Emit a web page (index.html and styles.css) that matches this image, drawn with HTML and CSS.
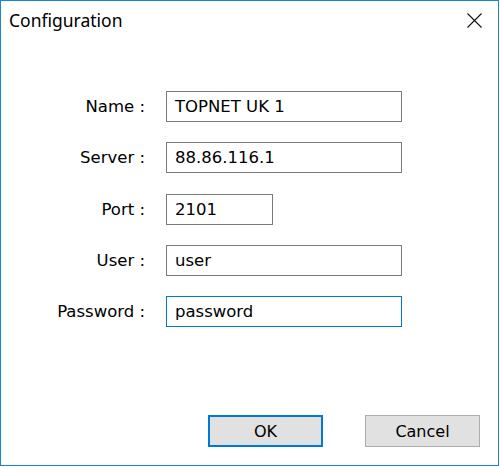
FILE: index.html
```html
<!DOCTYPE html>
<html>
<head>
<meta charset="utf-8">
<link rel="stylesheet" href="styles.css">
</head>
<body>
<div class="window">
  <div class="titlebar">
    <span class="title">Configuration</span>
    <svg class="close" width="15" height="15" viewBox="0 0 15 15"><path d="M0.5 0.5 L14.5 14.5 M14.5 0.5 L0.5 14.5" stroke="#111" stroke-width="1.1" fill="none"/></svg>
  </div>
  <div class="form">
    <label class="lbl">Name :</label>
    <div class="field wide">TOPNET UK 1</div>
    <label class="lbl">Server :</label>
    <div class="field wide">88.86.116.1</div>
    <label class="lbl">Port :</label>
    <div class="field short">2101</div>
    <label class="lbl">User :</label>
    <div class="field wide">user</div>
    <label class="lbl">Password :</label>
    <div class="field wide focused">password</div>
  </div>
  <div class="buttons">
    <div class="btn default">OK</div>
    <div class="btn">Cancel</div>
  </div>
</div>
</body>
</html>
```
FILE: styles.css
```css
html, body {
  margin: 0;
  padding: 0;
  background: #fff;
}
.window {
  box-sizing: border-box;
  width: 499px;
  height: 466px;
  border: 1px solid #1883d7;
  display: flex;
  flex-direction: column;
  background: #fff;
}
.titlebar {
  height: 39px;
  display: flex;
  align-items: center;
  justify-content: space-between;
  padding-left: 8px;
}
.title {
  font-family: "Noto Sans", "Open Sans", sans-serif;
  font-size: 17.5px;
  color: #000;
  position: relative;
  top: -1px;
}
.close {
  margin-right: 16px;
}
.form {
  margin-top: 51px;
  display: grid;
  grid-template-columns: 144px max-content;
  column-gap: 21px;
  row-gap: 20.25px;
  align-items: center;
  font-family: "DejaVu Sans", Tahoma, sans-serif;
  font-size: 16.5px;
  color: #000;
}
.lbl {
  text-align: right;
}
.field {
  box-sizing: border-box;
  height: 31px;
  border: 1px solid #7a7a7a;
  padding-left: 8px;
  display: flex;
  align-items: center;
}
.wide { width: 236px; }
.short { width: 107px; }
.focused { border-color: #0078d7; }
.buttons {
  margin-top: auto;
  display: flex;
  justify-content: flex-end;
  gap: 42px;
  padding: 0 18px 18px 0;
}
.btn {
  box-sizing: border-box;
  width: 115px;
  height: 32px;
  background: #e1e1e1;
  border: 1px solid #adadad;
  display: flex;
  align-items: center;
  justify-content: center;
  font-family: "DejaVu Sans", Tahoma, sans-serif;
  font-size: 16px;
  color: #000;
}
.btn.default {
  border: 2px solid #0078d7;
}
```
